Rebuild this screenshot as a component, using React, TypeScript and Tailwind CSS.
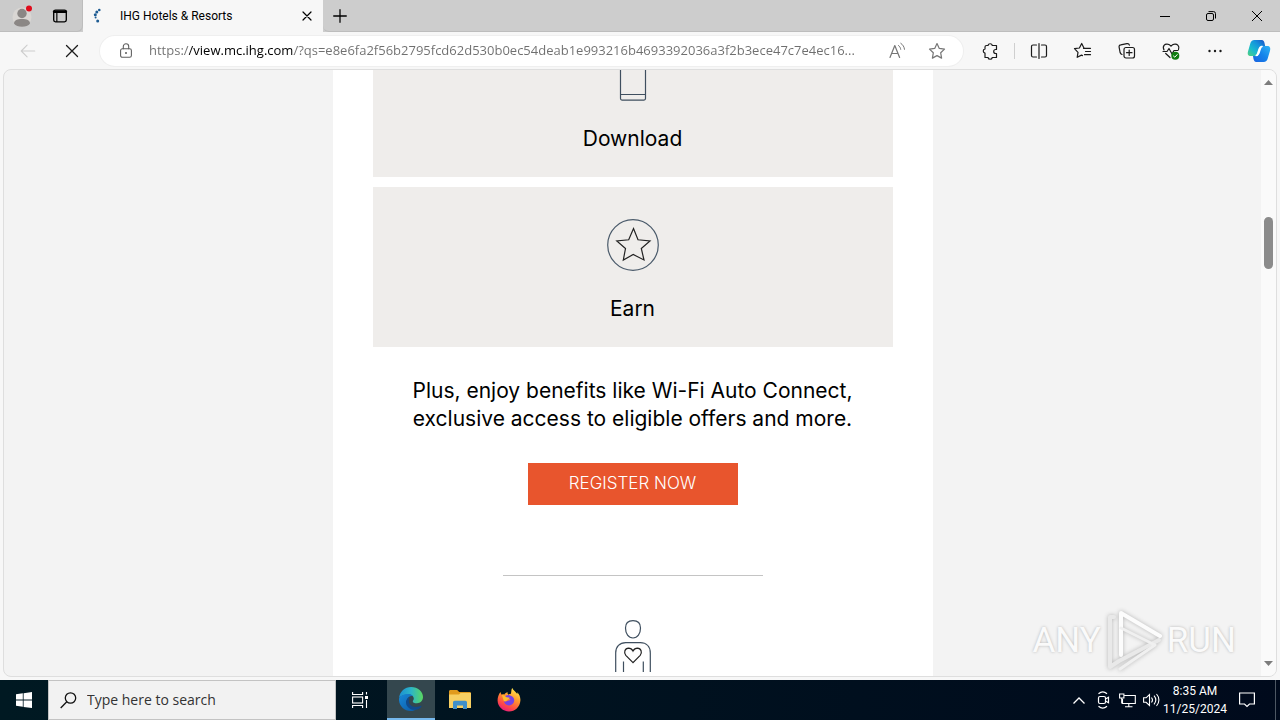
import { useState } from 'react';
import type { ReactNode } from 'react';

const PAGE_URL = "https://view.mc.ihg.com/?qs=e8e6fa2f56b2795fcd62d530b0ec54deab1e993216b4693392036a3f2b3ece47c7e4ec16...";

type IconProps = {
    size?: number;
    className?: string;
    children: ReactNode;
};

// outline icon on a 20px grid
function Icon({ size = 20, className = "", children }: IconProps) {
    return (
        <svg width={size} height={size} viewBox="0 0 20 20" fill="none" stroke="currentColor" strokeWidth="1.2"
            strokeLinecap="round" strokeLinejoin="round" aria-hidden="true" className={"shrink-0 " + className}>
            {children}
        </svg>
    );
}

function ToolButton({ label, children }: { label: string; children: ReactNode }) {
    return (
        <button aria-label={label} className="flex h-8 w-11 shrink-0 items-center justify-center text-[#1b1b1b]">
            {children}
        </button>
    );
}

function TitleBar() {
    return (
        <header className="flex h-8 shrink-0 bg-[#cdcdcd]">
            <div className="flex w-[83px] shrink-0 items-center rounded-br-md border-r border-b border-[#bdbdbd] bg-[#cbcbcb]">
                <button aria-label="Profile" className="ml-3 flex w-5 justify-center">
                    <svg width="20" height="22" viewBox="0 0 20 22" aria-hidden="true">
                        <circle cx="10" cy="12" r="9.5" fill="#d9d6d3" />
                        <circle cx="10" cy="8.500" r="4.700" fill="#8b8785" />
                        <path d="M2 18.500c0-3.200 3.200-4.500 8-4.500s8 1.300 8 4.500c-1.500 2.200-4.500 3.200-8 3.200s-6.500-1-8-3.200z" fill="#8b8785" />
                        <circle cx="17" cy="3.500" r="3" fill="#e00b1c" />
                    </svg>
                </button>
                <button aria-label="Tab actions" className="ml-4 flex w-6 justify-center text-black">
                    <Icon size={18}>
                        <rect x="3" y="3.500" width="14" height="13" rx="2" strokeWidth="1.500" />
                        <path d="M3.500 5.300h13" strokeWidth="3" />
                        <path d="M6.500 6v10" strokeWidth="1.300" />
                    </Icon>
                </button>
            </div>
            <div className="flex w-60 shrink-0 items-center bg-[#f7f7f7] pr-2 pl-2">
                <svg width="16" height="16" viewBox="0 0 16 16" fill="#1e5c93" className="mr-[13px] shrink-0" aria-hidden="true">
                    <circle cx="8.300" cy="2" r="1.300" />
                    <circle cx="5.800" cy="3.900" r="1.500" />
                    <circle cx="4.300" cy="6.700" r="1.500" />
                    <circle cx="4.600" cy="9.400" r="1" />
                    <circle cx="6.700" cy="13" r="1.500" />
                </svg>
                <span className="flex-1 truncate font-[Roboto,sans-serif] text-xs text-black">IHG Hotels &amp; Resorts</span>
                <button aria-label="Close tab" className="flex size-4 items-center justify-center text-black">
                    <Icon size={16}><path d="M5 5l10 10M15 5L5 15" strokeWidth="1.500" /></Icon>
                </button>
            </div>
            <button aria-label="New tab" className="flex w-[34px] shrink-0 items-center justify-center rounded-bl-md border-b border-[#bdbdbd] text-black">
                <Icon size={18}><path d="M3 10h14M10 3v14" strokeWidth="1.400" /></Icon>
            </button>
            <div className="flex-1 border-b border-[#bdbdbd]" />
            <div className="flex border-b border-[#bdbdbd] text-black">
                <button aria-label="Minimize" className="flex w-[46px] items-center justify-center">
                    <svg width="10" height="10" aria-hidden="true"><path d="M0 5.500h10" stroke="currentColor" /></svg>
                </button>
                <button aria-label="Restore" className="flex w-[46px] items-center justify-center">
                    <svg width="10" height="10" viewBox="0 0 10 10" fill="none" stroke="currentColor" aria-hidden="true">
                        <rect x=".5" y="2.500" width="7" height="7" rx="1.500" />
                        <path d="M2.500 .6H7.500a2 2 0 0 1 2 2V7.500" />
                    </svg>
                </button>
                <button aria-label="Close" className="flex w-[46px] items-center justify-center">
                    <svg width="10" height="10" aria-hidden="true"><path d="M0 0l10 10M10 0L0 10" stroke="currentColor" /></svg>
                </button>
            </div>
        </header>
    );
}

function AddressBar() {
    const [url, setUrl] = useState(PAGE_URL);

    return (
        <form className="ml-[6px] flex h-[30px] min-w-0 flex-1 items-center rounded-full bg-white pr-4 pl-4 ring-1 ring-[#efefef]"
            onSubmit={(event) => event.preventDefault()}>
            <Icon size={18} className="ml-px text-[#5f5f5f]">
                <rect x="4" y="7.500" width="12" height="9.500" rx="2" />
                <path d="M7 7.500V5a3 3 0 0 1 6 0v2.500" />
                <circle cx="10" cy="12.300" r=".5" fill="currentColor" />
            </Icon>
            {/* the host name is darker than the rest of the address */}
            <input aria-label="Address" value={url} onChange={(event) => setUrl(event.target.value)}
                className="ml-[14px] min-w-0 flex-1 bg-[linear-gradient(90deg,#6f6f6f_40px,#000_40px,#000_145px,#6f6f6f_145px)] bg-clip-text text-[13px] text-transparent outline-none" />
            <button type="button" aria-label="Read aloud" className="ml-3 flex w-5 justify-center text-[#767676]">
                <Icon>
                    <path d="M3 16.500L7.800 4.500 12.600 16.500M4.700 12.500h6.200" />
                    <path d="M11.500 4.500c1.300 1 2 2.200 2.200 3.800M13.800 2.300c2.200 1.500 3.400 3.500 3.700 6" strokeWidth="1" />
                </Icon>
            </button>
            <button type="button" aria-label="Add to favorites" className="ml-5 flex w-5 justify-center text-[#767676]">
                <Icon><path d="M10 2.500l2.300 4.900 5.200.7-3.800 3.700.9 5.300L10 14.600l-4.600 2.500.9-5.300L2.500 8.100l5.200-.7z" /></Icon>
            </button>
        </form>
    );
}

function Toolbar() {
    return (
        <nav className="flex h-[37px] shrink-0 items-center bg-[#f7f7f7] pl-[6px]">
            <button aria-label="Back" className="flex w-11 justify-center text-[#cdcdcd]">
                <Icon size={18}><path d="M17.500 10H2.500M9 3.500L2.500 10 9 16.500" /></Icon>
            </button>
            <button aria-label="Stop" className="flex w-11 justify-center text-[#1b1b1b]">
                <Icon><path d="M4.500 4.500l11 11M15.500 4.500l-11 11" strokeWidth="1.300" /></Icon>
            </button>
            <AddressBar />
            <div className="ml-[5px] flex items-center">
                <ToolButton label="Extensions">
                    <Icon>
                        <path d="M6.500 4.500H8a2.200 2.200 0 0 1 4.300 0H16.500v4h-.8a2 2 0 0 0 0 4h.8v4h-4.200a2.200 2.200 0 0 1-4.300 0H5v-4.300a2.200 2.200 0 0 1 0-4.300V6a1.500 1.500 0 0 1 1.500-1.500z" />
                    </Icon>
                </ToolButton>
                <div className="mx-[2px] h-4 w-px bg-[#cfcfcf]" />
                <ToolButton label="Split screen">
                    <Icon>
                        <path d="M7.500 4H4a1.500 1.500 0 0 0-1.500 1.500v9A1.500 1.500 0 0 0 4 16h3.500M12.500 4H16a1.500 1.500 0 0 1 1.500 1.500v9A1.500 1.500 0 0 1 16 16h-3.500M10 2.500v15" />
                    </Icon>
                </ToolButton>
                <ToolButton label="Favorites">
                    <Icon>
                        <path d="M10.500 7.300H17.500M12.500 10.500h5M11.500 13.700h6" />
                        <path d="M10.800 6.800L8.700 2.500 6.400 7l-4.900.7L5 11.300l-.8 5 4.300-2.200 1 .5" />
                    </Icon>
                </ToolButton>
                <ToolButton label="Collections">
                    <Icon>
                        <rect x="7" y="6.500" width="10.500" height="10.500" rx="2" />
                        <path d="M12.200 9v5.500M9.500 11.700H15" />
                        <path d="M5 13.500c-1-.3-1.600-1-1.900-2L2.100 6.200C1.900 5 2.500 4 3.700 3.800l6.200-1.200c1.200-.2 2.200.4 2.500 1.500" />
                    </Icon>
                </ToolButton>
                <ToolButton label="Browser essentials">
                    <Icon>
                        <path d="M3 9C1 4.800 4 2.800 6.500 3.200 8.200 3.400 9.200 4.200 10 5.200c.8-1 1.800-1.800 3.500-2 2.500-.4 5.500 1.600 4 5.300M4.700 12.500L9 16.500" />
                        <path d="M2 10.500h4L8 7.500l3 5.500 2-3.500h4" />
                        <circle cx="14.300" cy="14.800" r="4" fill="#107c10" stroke="none" />
                        <path d="M12.500 15l1.300 1.200 2.400-2.600" stroke="#fff" strokeWidth="1" />
                    </Icon>
                </ToolButton>
                <ToolButton label="Settings and more">
                    <Icon>
                        <g fill="currentColor" stroke="none">
                            <circle cx="4.500" cy="10" r="1.200" />
                            <circle cx="10" cy="10" r="1.200" />
                            <circle cx="15.500" cy="10" r="1.200" />
                        </g>
                    </Icon>
                </ToolButton>
                <button aria-label="Copilot" className="flex h-8 w-[43px] items-center justify-center">
                    <svg width="24" height="22" viewBox="0 0 26 24" aria-hidden="true">
                        <defs>
                            <linearGradient id="cpA" x1="1" y1="0" x2="0" y2="1">
                                <stop offset="0" stopColor="#1b4fc4" />
                                <stop offset=".35" stopColor="#1593dc" />
                                <stop offset=".65" stopColor="#19b9cf" />
                                <stop offset="1" stopColor="#52d17c" />
                            </linearGradient>
                            <linearGradient id="cpB" x1="1" y1="0" x2="0" y2="1">
                                <stop offset="0" stopColor="#2fb4f5" />
                                <stop offset=".5" stopColor="#1583ea" />
                                <stop offset="1" stopColor="#1a62e0" />
                            </linearGradient>
                        </defs>
                        <path d="M8 0h8c2 0 2.500 1.500 3 3.200l.7 3.300h-3c-2 0-3 1-3.600 3l-1.600 5.200c-.6 1.800-1.500 2.800-3.200 2.800H4c-3 0-3.800-2-3-5L3.500 3.800C4.200 1.300 5.500 0 8 0z" fill="url(#cpA)" />
                        <path d="M18 24h-8c-2 0-2.500-1.500-3-3.200l-.6-3.300h2.900c2 0 3-1 3.600-3l1.600-5.200c.6-1.800 1.500-2.800 3.200-2.800H22c3 0 3.800 2.300 3 5.300l-2.500 8.400C21.800 22.600 20.500 24 18 24z" fill="url(#cpB)" />
                        <path d="M15.800 7c-1.400.4-2.200 1.400-2.700 2.700l-1.700 5.200c-.4 1.300-1 1.800-2 2.200 1.900-.1 2.900-1.100 3.500-2.600l1.600-5c.5-1.500 1.200-2.200 2.400-2.500z" fill="#fff" stroke="#fff" strokeWidth="1.500" />
                    </svg>
                </button>
            </div>
        </nav>
    );
}

function Card({ label, children }: { label: string; children: ReactNode }) {
    return (
        <section className="flex h-40 shrink-0 flex-col items-center bg-[#efedeb] pt-8">
            {children}
            <h2 className="mt-6 text-[21px] leading-7">{label}</h2>
        </section>
    );
}

function EmailBody() {
    return (
        <article className="mx-auto flex h-full w-[600px] flex-col justify-end overflow-hidden bg-white px-10 pb-1 text-center font-[Inter,sans-serif] text-black">
            <div className="flex flex-col gap-[10px]">
                <Card label="Download">
                    <svg width="52" height="52" viewBox="0 0 52 52" fill="none" stroke="#3f4f5f" strokeWidth="1.200" className="shrink-0" aria-hidden="true">
                        <rect x="13.500" y=".6" width="25" height="50.500" rx="1.500" />
                        <path d="M13.500 45.500h25" />
                    </svg>
                </Card>
                <Card label="Earn">
                    <svg width="52" height="52" viewBox="0 0 52 52" fill="none" strokeWidth="1.200" className="shrink-0" aria-hidden="true">
                        <circle cx="26" cy="26" r="25.300" stroke="#4b5b6b" />
                        <path d="M26.500 9.500L31 20.800 43 22 34.300 29.500 37 41 26.200 35.500 16.300 41 18.500 29.500 9.800 22 21.700 20.800z" stroke="#222" />
                    </svg>
                </Card>
            </div>
            <p className="mt-[30px] text-[21px] leading-7">
                Plus, enjoy benefits like Wi-Fi Auto Connect,<br />
                exclusive access to eligible offers and more.
            </p>
            <a href="#register" className="mt-[30px] flex h-[42px] w-[210px] shrink-0 items-center justify-center self-center bg-[#e8552d] text-[17px] font-light text-white">
                REGISTER NOW
            </a>
            <hr className="mt-[70px] w-[260px] shrink-0 self-center border-[#c4c4c4]" />
            <svg width="52" height="52" viewBox="0 0 52 52" fill="none" stroke="#3f4f5f" strokeWidth="1.200" className="mt-11 shrink-0 self-center" aria-hidden="true">
                <path d="M26 .7c4.800 0 7.500 2.800 7.500 7.300 0 5.800-3 10-7.500 10s-7.500-4.200-7.500-10C18.500 3.500 21.200.7 26 .7z" />
                <path d="M8.700 52V33c0-6.500 4-10.300 10-10.300h14.600c6 0 10 3.800 10 10.300v19M16.500 41.500V52M36.300 41.500V52" />
                <path d="M26 42.700l-7.200-7.400c-2.300-2.600-1-7 2.700-7.200 2 0 3.500 1 4.500 3 1-2 2.500-3 4.500-3 3.700.2 5 4.600 2.700 7.200z" stroke="#222" />
            </svg>
        </article>
    );
}

function Watermark() {
    return (
        <div className="pointer-events-none absolute right-10 bottom-0 flex items-center gap-1 font-[Roboto,sans-serif] text-[35px] leading-[70px] text-[#fafafa] [text-shadow:0_0_3px_#b4b4b4]">
            <span>ANY</span>
            {/* folded ribbon triangle */}
            <svg width="58" height="64" viewBox="0 0 58 64" fill="none" strokeLinejoin="round" strokeLinecap="round" className="shrink-0 drop-shadow-[0_0_2px_#b4b4b4]" aria-hidden="true">
                <path d="M16 46V4L55 27" stroke="#fcfcfc" strokeWidth="4" />
                <path d="M9 8H5v50l9-6 40-21" stroke="#e9e9e9" strokeWidth="4" />
                <path d="M16 19L50 36 15 60" stroke="#f0f0f0" strokeWidth="3" />
            </svg>
            <span>RUN</span>
        </div>
    );
}

function ScrollBar() {
    return (
        <div className="flex w-[15px] shrink-0 flex-col items-center bg-[#fafafa] py-[10px]">
            <svg width="9" height="5" className="shrink-0" aria-hidden="true"><path d="M0 5L4.500 0 9 5z" fill="#7c7c7c" /></svg>
            <div className="mt-[132px] h-[52px] w-[9px] shrink-0 rounded-full bg-[#8b8b8b]" />
            <div className="flex-1" />
            <svg width="9" height="5" className="shrink-0" aria-hidden="true"><path d="M0 0h9L4.500 5z" fill="#7c7c7c" /></svg>
        </div>
    );
}

function TaskButton({ label, active = false, children }: { label: string; active?: boolean; children: ReactNode }) {
    return (
        <button aria-label={label}
            className={active
                ? "flex w-12 shrink-0 items-center justify-center border-b-2 border-[#76b9ed] bg-[#34474e]"
                : "flex w-12 shrink-0 items-center justify-center"}>
            {children}
        </button>
    );
}

function TaskBar() {
    return (
        <footer className="flex h-10 shrink-0 bg-linear-to-r from-[#001922] to-[#000a1c] text-white">
            <TaskButton label="Start">
                <svg width="16" height="16" viewBox="0 0 16 16" fill="#fff" aria-hidden="true">
                    <path d="M0 2.200L6.800 1.300V7.600H0zM7.600 1.200L16 0v7.600H7.600zM0 8.400h6.800v6.400L0 13.800zM7.600 8.400H16V16L7.600 14.900z" />
                </svg>
            </TaskButton>
            <label className="flex w-72 shrink-0 items-center border border-[#c3c3c3] bg-[#f2f2f2] pl-[11px]">
                <svg width="17" height="17" viewBox="0 0 17 17" fill="none" stroke="#111" strokeWidth="1.300" className="mr-[10px] shrink-0" aria-hidden="true">
                    <circle cx="10.500" cy="6" r="5.200" />
                    <path d="M6.800 9.800L.7 16" />
                </svg>
                <input aria-label="Search" placeholder="Type here to search" className="min-w-0 flex-1 text-sm text-black outline-none placeholder:text-[#333]" />
            </label>
            <TaskButton label="Task view">
                <svg width="17" height="16" viewBox="0 0 17 16" fill="none" stroke="#fff" strokeWidth="1.100" aria-hidden="true">
                    <path d="M.6 0v2.500h10V0M.6 16v-2.500h10V16M14.500 0v2.500M14.500 8v8" />
                    <rect x=".6" y="5" width="10" height="6" />
                    <path d="M13 4h3v3h-3z" fill="#fff" stroke="none" />
                </svg>
            </TaskButton>
            <div className="ml-[3px] flex gap-px">
                <TaskButton label="Microsoft Edge" active>
                    <svg width="24" height="24" viewBox="0 0 24 24" aria-hidden="true">
                        <defs>
                            <linearGradient id="edA" x1="0" y1=".3" x2="1" y2=".3">
                                <stop offset="0" stopColor="#1b8fd2" />
                                <stop offset=".5" stopColor="#2cb5c8" />
                                <stop offset="1" stopColor="#5ad860" />
                            </linearGradient>
                            <linearGradient id="edB" x1="0" y1="0" x2="1" y2="1">
                                <stop offset="0" stopColor="#1788d8" />
                                <stop offset="1" stopColor="#0c59a4" />
                            </linearGradient>
                        </defs>
                        <path d="M0 11C.8 4.500 5.800 0 12.200 0 18.900 0 24 4.600 24 10c0 3.700-2.700 6.200-6 6.200-2.800 0-4.200-.8-4.200-1.800 0-.7 1-1.100 1-2.800 0-2.200-2.200-4.100-5.200-4.100C5.700 7.500 2 8.600 0 11z" fill="url(#edA)" />
                        <path d="M0 11.500C1.500 8.500 5.300 6.800 9 7c2.200.1 3.800.8 4.700 1.700C9.500 9 7.300 12 8 15.500c.8 4.200 5 6.900 10 6.200-2 1.500-4 2.300-6.200 2.300C5 24-.5 18.500 0 11.500z" fill="url(#edB)" />
                        <path d="M10 12.500c-1 4 2.200 7.500 7 7.500 2.200 0 3.600-.6 4.800-1.200.5-.2.900.2.600.6-1.200 1.700-2.500 2.600-4.600 3.200C11.500 24 6.500 19.500 7 14.500c.2-1.500 1.300-3.300 3.300-4.200z" fill="#114a8b" />
                    </svg>
                </TaskButton>
                <TaskButton label="File Explorer">
                    <svg width="22" height="20" viewBox="0 0 22 20" aria-hidden="true">
                        <path d="M0 1.500C0 .7.600 0 1.400 0h6.800l2 2H20.500c.8 0 1.500.5 1.500 1.400V18H0z" fill="#e09a1d" />
                        <path d="M0 4.500h10l1.500-1.500H22v15H0z" fill="#f7cf62" />
                        <path d="M4 19v-6.500c0-1 .7-1.800 1.700-1.800h10.600c1 0 1.700.8 1.700 1.800V19h-4v-3.500H8V19z" fill="#3f8fc9" />
                    </svg>
                </TaskButton>
                <TaskButton label="Firefox">
                    <svg width="24" height="24" viewBox="0 0 24 24" aria-hidden="true">
                        <defs>
                            <linearGradient id="ffA" x1=".8" y1="0" x2=".3" y2="1">
                                <stop offset="0" stopColor="#fff14f" />
                                <stop offset=".4" stopColor="#ff9a2e" />
                                <stop offset=".75" stopColor="#ff4b45" />
                                <stop offset="1" stopColor="#e8197e" />
                            </linearGradient>
                        </defs>
                        <path d="M3.500 4c.2 1.200.6 2 1.200 2.700.8-.4 1.800-.5 2.700-.3C8.200 5.200 9.300 4.500 10.600 4c-.3 1 0 1.800.7 2.400 1 0 2-.1 2.700-.8C14.500 3.500 14 1.700 15.300 0c1 2.500 3.500 3.700 5 6 .1-.6 0-1.200-.2-1.800 2.300 2 3.500 5 3.300 8.300C23 19 18 23.500 12 23.500S.8 18.800.6 12.800C.5 9.500 1.500 6.500 3.500 4z" fill="url(#ffA)" />
                        <path d="M7.500 9.300c1-1.800 3-2.500 5-2.100 3 .5 5 2.800 4.700 5.600-.3 2.900-2.600 4.700-5.300 4.600-2.900-.1-5-2.300-4.900-4.500.8.700 2.300.9 3.500.2.900-.5 1.700-.9 2.300-.8.800 0 .7-1-.3-1.300-1.800-.5-2.500-.9-5-1.700z" fill="#7542e5" />
                        <path d="M4.800 6.800c2 .3 3.400 1.500 4.800 2.500l3.200.4c-.3 1.200-2 1.300-2.200 2.100-.3 1.200-2.300 2-3.800 1.300z" fill="#ffbd2e" />
                    </svg>
                </TaskButton>
            </div>
            <div className="flex-1" />
            <div className="flex items-center">
                <button aria-label="Show hidden icons" className="flex w-6 justify-center">
                    <svg width="12" height="7" fill="none" stroke="#fff" strokeWidth="1.300" aria-hidden="true"><path d="M.5 6.500L6 1l5.500 5.500" /></svg>
                </button>
                <button aria-label="Camera" className="flex w-6 justify-center">
                    <svg width="14" height="18" viewBox="0 0 14 18" fill="none" stroke="#fff" strokeWidth="1.200" aria-hidden="true">
                        <rect x="2.500" y="5.500" width="7" height="7" rx="1.500" />
                        <path d="M9.500 8l3-1.700v5.400L9.500 10M2.500 2.800C5 .6 8.500.6 11 2.800M2.500 15.200c2.500 2.200 6 2.200 8.500 0" />
                    </svg>
                </button>
                <button aria-label="Network" className="flex w-6 justify-center">
                    <svg width="17" height="15" viewBox="0 0 17 15" fill="none" stroke="#fff" strokeWidth="1.100" aria-hidden="true">
                        <path d="M5.500 2.500h10.800v8H3.500V6M.6 1h4.300v4H.6zM2.700 5v5.500M9.800 10.500v3M6 13.800h7.500" />
                    </svg>
                </button>
                <button aria-label="Volume" className="flex w-6 justify-center">
                    <svg width="17" height="14" viewBox="0 0 17 14" fill="none" stroke="#fff" strokeWidth="1.100" aria-hidden="true">
                        <path d="M.6 4.800h2.500L6.500 1.500v11L3.100 9.300H.6zM8.500 4.500c1.200 1.500 1.200 3.500 0 5M11 2.700c2.200 2.600 2.200 6 0 8.600M13.500 1c3.200 3.500 3.200 8.500 0 12" />
                    </svg>
                </button>
                <div className="w-16 text-center font-[Roboto,sans-serif] text-xs leading-[18px] whitespace-nowrap">
                    <p>8:35 AM</p>
                    <p>11/25/2024</p>
                </div>
                <button aria-label="Notifications" className="ml-3 flex w-4 justify-center">
                    <svg width="16" height="16" viewBox="0 0 16 16" fill="none" stroke="#fff" strokeWidth="1.200" aria-hidden="true">
                        <path d="M.6 1h14.800v11H10.500L8 14.500 5.500 12H.6z" />
                    </svg>
                </button>
                <div className="mr-1 ml-5 h-10 w-px bg-[#4d5763]" />
            </div>
        </footer>
    );
}

export default function App() {
    return (
        <div className="flex h-screen flex-col overflow-hidden bg-[#f7f7f7] font-['Open_Sans','Noto_Sans',sans-serif]">
            <TitleBar />
            <Toolbar />
            <main className="relative mx-[3px] mb-[3px] flex min-h-0 flex-1 overflow-hidden rounded-lg border border-[#dedede] bg-[#f3f3f3]">
                <div className="min-w-0 flex-1">
                    <EmailBody />
                </div>
                <ScrollBar />
                <Watermark />
            </main>
            <TaskBar />
        </div>
    );
}
